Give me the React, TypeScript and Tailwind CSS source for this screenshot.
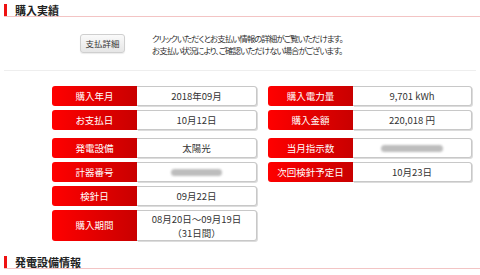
import React from "react";

const font = "font-['Noto_Sans_CJK_JP','Noto_Sans',sans-serif]";

const Blur = ({ w }: { w: string }) => (
  <div className={`${w} h-[7px] rounded-full bg-[#bdbdbd] blur-[1px]`} />
);

const Row = ({
  label,
  children,
  tall,
}: {
  label: string;
  children: React.ReactNode;
  tall?: boolean;
}) => (
  <div className={`flex ${tall ? "h-[31px]" : "h-[20px]"}`}>
    <div className="w-[85px] shrink-0 flex items-center justify-center rounded-l-[3px] bg-gradient-to-r from-[#ff0000] to-[#c90000] text-white text-[9.5px] [font-feature-settings:'palt']">
      {label}
    </div>
    <div className="flex-1 flex flex-col items-center justify-center rounded-r-[3px] border border-l-0 border-[#c8c8c8] shadow-[1px_1px_0_#dcdcdc] bg-white text-[#333] text-[9.5px] leading-[14px]">
      {children}
    </div>
  </div>
);

const SectionTitle = ({ title }: { title: string }) => (
  <div className="flex items-center h-[13px] border-b border-[#f3c4c4] ml-[4px]">
    <div className="w-[3px] h-[12px] bg-[#ee1111] mb-[1px]" />
    <div className="ml-[8px] text-[11px] font-bold text-[#222] leading-none [font-feature-settings:'palt']">
      {title}
    </div>
  </div>
);

export default function App() {
  return (
    <div className={`w-[480px] h-[275px] bg-white overflow-hidden ${font}`}>
      <div className="pt-[4px]">
        <SectionTitle title="購入実績" />
      </div>

      <div className="flex items-center ml-[80px] mt-[16px] h-[21px]">
        <button className="w-[45px] h-[19px] rounded-[3px] border border-[#cfcfcf] bg-gradient-to-b from-[#fafafa] to-[#e6e6e6] text-[8.5px] text-[#333] shadow-[0_1px_1px_rgba(0,0,0,0.08)]">
          支払詳細
        </button>
        <div className="ml-[27px] text-[8.5px] tracking-[-1px] leading-[12px] text-[#333] [font-feature-settings:'palt']">
          <div>クリックいただくとお支払い情報の詳細がご覧いただけます。</div>
          <div>お支払い状況により、ご確認いただけない場合がございます。</div>
        </div>
      </div>

      <div className="mt-[16px] mx-[4px] border-t border-[#eeeeee]" />

      <div className="ml-[52px] w-[420px] mt-[15px]">
        <div className="grid grid-cols-[205px_204px] gap-x-[11px] gap-y-[4px]">
          <Row label="購入年月">2018年09月</Row>
          <Row label="購入電力量">9,701 kWh</Row>
          <Row label="お支払日">10月12日</Row>
          <Row label="購入金額">220,018 円</Row>
        </div>

        <div className="grid grid-cols-[205px_204px] gap-x-[11px] mt-[8px] items-start">
          <div className="flex flex-col gap-[4px]">
            <Row label="発電設備">太陽光</Row>
            <Row label="計器番号">
              <Blur w="w-[51px]" />
            </Row>
            <Row label="検針日">09月22日</Row>
            <Row label="購入期間" tall>
              <div>08月20日～09月19日</div>
              <div>（31日間）</div>
            </Row>
          </div>
          <div className="flex flex-col gap-[4px]">
            <Row label="当月指示数">
              <Blur w="w-[62px]" />
            </Row>
            <Row label="次回検針予定日">10月23日</Row>
          </div>
        </div>
      </div>

      <div className="mt-[15px]">
        <SectionTitle title="発電設備情報" />
      </div>
    </div>
  );
}
